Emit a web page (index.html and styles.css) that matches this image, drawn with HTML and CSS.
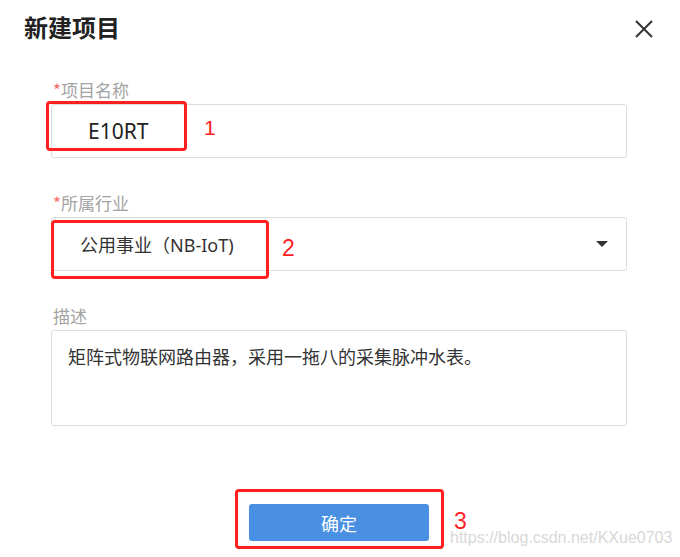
FILE: index.html
```html
<!DOCTYPE html>
<html lang="zh-CN">
<head>
<meta charset="utf-8">
<title>新建项目</title>
<link rel="stylesheet" href="styles.css">
</head>
<body>
<div class="dialog">
  <header class="head">
    <h1 class="title">新建项目</h1>
    <button class="close" type="button" aria-label="关闭">
      <svg width="18" height="18" viewBox="0 0 18 18"><path d="M1 1L17 17M17 1L1 17" stroke="#333" stroke-width="2" fill="none"/></svg>
    </button>
  </header>
  <form class="form">
    <div class="field">
      <label class="label"><span class="req">*</span>项目名称</label>
      <div class="input input-name">E10RT</div>
    </div>
    <div class="field">
      <label class="label"><span class="req">*</span>所属行业</label>
      <div class="input select"><span class="select-text">公用事业（NB-IoT)</span><span class="caret"></span></div>
    </div>
    <div class="field">
      <label class="label">描述</label>
      <div class="input textarea">矩阵式物联网路由器，采用一拖八的采集脉冲水表。</div>
    </div>
  </form>
  <div class="footer">
    <button class="ok" type="button">确定</button>
  </div>

  <div class="mark mark-1"></div>
  <div class="mark mark-2"></div>
  <div class="mark mark-3"></div>
  <span class="num num-1">1</span>
  <span class="num num-2">2</span>
  <span class="num num-3">3</span>
  <span class="watermark">https://blog.csdn.net/KXue0703</span>
</div>
</body>
</html>
```

FILE: styles.css
```css
* { box-sizing: border-box; }
html, body { margin: 0; padding: 0; background: #fff; }
body { font-family: "Noto Sans", "Noto Sans CJK SC", sans-serif; }

.dialog {
  position: relative;
  width: 680px;
  height: 557px;
  overflow: hidden;
}

.head {
  display: flex;
  align-items: center;
  justify-content: space-between;
  height: 54px;
  padding: 0 27px 0 24px;
}
.title {
  margin: 0;
  font-family: "Noto Sans CJK SC", sans-serif;
  font-size: 24px;
  font-weight: 700;
  color: #222;
  line-height: 54px;
}
.close {
  border: 0;
  background: none;
  padding: 0;
  width: 18px;
  height: 18px;
  margin-top: 4px;
  display: flex;
}

.form {
  display: flex;
  flex-direction: column;
  padding: 23px 53px 0 51px;
  gap: 32px;
}
.field {
  display: flex;
  flex-direction: column;
  gap: 1px;
}
.label {
  font-family: "Noto Sans CJK SC", sans-serif;
  font-size: 17px;
  line-height: 26px;
  color: #a3a3a3;
  padding-left: 2px;
}
.req { color: #f56c6c; }

.input {
  border: 1px solid #dcdcdc;
  border-radius: 3px;
  height: 54px;
  display: flex;
  align-items: center;
  color: #333;
}
.input-name {
  padding-left: 36px;
  font-family: "Noto Sans", sans-serif;
  font-size: 21px;
  color: #222;
}
.select {
  padding: 0 18px 0 28px;
  justify-content: space-between;
  font-size: 18px;
}
.caret {
  width: 0;
  height: 0;
  border-left: 6px solid transparent;
  border-right: 6px solid transparent;
  border-top: 6px solid #333;
}
.textarea {
  height: 96px;
  align-items: flex-start;
  padding: 12px 16px;
  font-family: "Noto Sans CJK SC", sans-serif;
  font-size: 18px;
  line-height: 26px;
}

.footer {
  display: flex;
  justify-content: center;
  padding: 78px 2px 0 0;
}
.ok {
  width: 180px;
  height: 37px;
  border: 0;
  border-radius: 3px;
  background: #4a90e2;
  color: #fff;
  font-family: "Noto Sans CJK SC", sans-serif;
  font-size: 18px;
  padding: 0;
}

.mark {
  position: absolute;
  border: 3px solid #ff1f1f;
  border-radius: 4px;
}
.mark-1 { left: 46px; top: 101px; width: 141px; height: 50px; }
.mark-2 { left: 51px; top: 220px; width: 218px; height: 59px; }
.mark-3 { left: 235px; top: 489px; width: 209px; height: 60px; }

.num {
  position: absolute;
  font-family: "Liberation Sans", Arial, sans-serif;
  color: #ff1f1f;
  line-height: 0.8;
}
.num-1 { left: 204px; top: 120px; font-size: 21px; }
.num-2 { left: 282px; top: 239px; font-size: 23px; }
.num-3 { left: 454px; top: 512px; font-size: 23px; }

.watermark {
  position: absolute;
  left: 450px;
  top: 532px;
  font-family: "Liberation Sans", Arial, sans-serif;
  font-size: 16px;
  line-height: 12px;
  color: #d8d8d8;
  white-space: nowrap;
}
```
